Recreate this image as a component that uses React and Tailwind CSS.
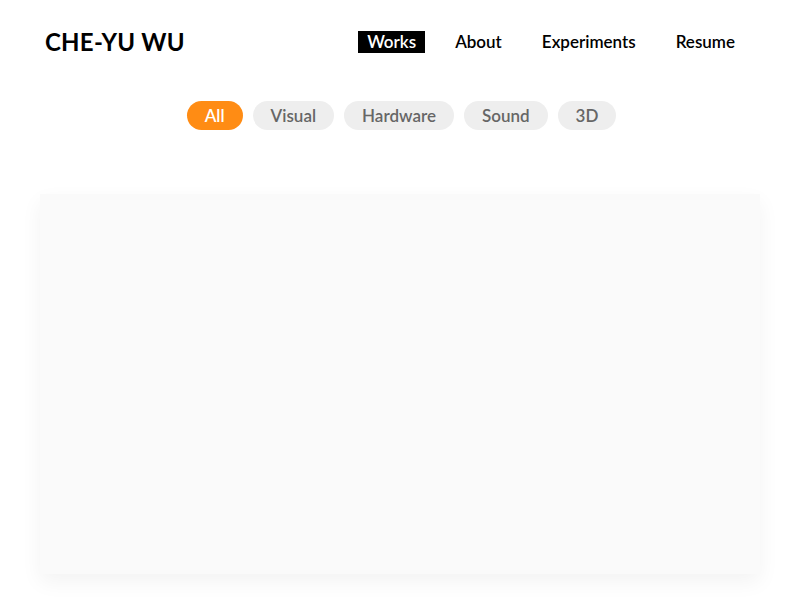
const navItems = ['Works', 'About', 'Experiments', 'Resume']
const filters = ['All', 'Visual', 'Hardware', 'Sound', '3D']

export default function App() {
	return (
		<div className="min-h-screen bg-white font-['Lato','Noto_Sans',sans-serif] text-black">
			<header className="flex items-center justify-between pl-[45px] pr-[55px] pt-[27px]">
				<h1 className="text-[24px] font-bold leading-[30px] tracking-[0.01em]">CHE-YU WU</h1>
				<nav className="flex items-center gap-5">
					{navItems.map((item, i) => (
						<a
							key={item}
							className={
								i === 0
									? 'bg-black px-[9px] text-[17px] font-semibold leading-[22px] text-white'
									: 'px-[10px] text-[17px] font-semibold leading-[22px] text-black'
							}
						>
							{item}
						</a>
					))}
				</nav>
			</header>

			<div className="mt-[44px] flex justify-center gap-[10px] pl-[3px]">
				{filters.map((f, i) => (
					<button
						key={f}
						className={
							i === 0
								? 'h-[29px] rounded-full bg-[#ff8c14] px-[18px] text-[17px] font-semibold text-white'
								: 'h-[29px] rounded-full bg-[#eeeeee] px-[18px] text-[17px] font-semibold text-[#666666]'
						}
					>
						{f}
					</button>
				))}
			</div>

			<div className="mx-[40px] mt-[64px] h-[380px] bg-[#fafafa] shadow-[0_8px_20px_rgba(0,0,0,0.05)]" />
		</div>
	)
}
